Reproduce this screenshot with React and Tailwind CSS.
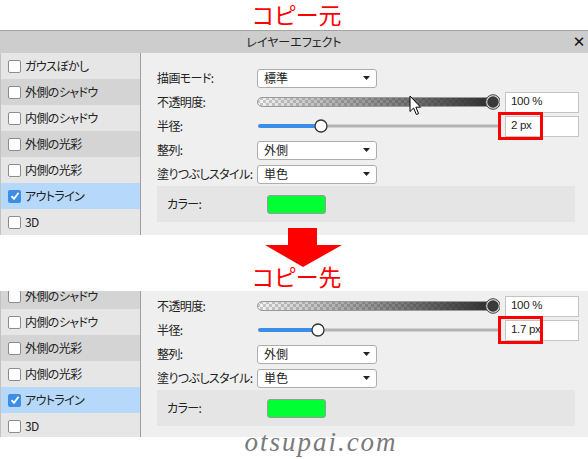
import React from 'react';

const jp = "font-['Meiryo_UI','Noto_Sans_CJK_JP',sans-serif] [font-feature-settings:'palt']";

const Checkbox = ({ checked }) =>
  checked ? (
    <span className="w-[13px] h-[13px] rounded-[2px] bg-[#3c8de3] flex items-center justify-center shrink-0">
      <svg width="10" height="10" viewBox="0 0 10 10">
        <path d="M1.5 5.2 L4 7.8 L8.6 1.8" fill="none" stroke="#fff" strokeWidth="1.8" />
      </svg>
    </span>
  ) : (
    <span className="w-[13px] h-[13px] rounded-[2px] bg-white border border-[#8c8c8c] shrink-0" />
  );

const EffectRow = ({ label, bg, checked, cut }) => (
  <div className={`flex items-center gap-[4px] pl-[7px] h-[26px] shrink-0 ${bg} ${cut ? 'mt-[-8px]' : ''}`}>
    <Checkbox checked={checked} />
    <span className="text-[12px] tracking-[-0.6px] text-[#222] whitespace-nowrap">{label}</span>
  </div>
);

const Dropdown = ({ value }) => (
  <div className="w-[120px] h-[19px] bg-white border border-[#adadad] rounded-[3px] flex items-center justify-between pl-[6px] pr-[6px]">
    <span className="text-[12px] text-[#222]">{value}</span>
    <svg width="7" height="4" viewBox="0 0 7 4">
      <path d="M0 0 H7 L3.5 4 Z" fill="#222" />
    </svg>
  </div>
);

const ValueBox = ({ value, marked }) => (
  <div className="relative ml-[5px]">
    <div className="w-[74px] h-[21px] bg-white border border-[#c4c4c4] flex items-center pl-[5px] text-[11.5px] tracking-[-0.3px] text-[#222] font-['Liberation_Sans',sans-serif]">
      {value}
    </div>
    {marked && (
      <div className="absolute left-[-7px] top-[-4px] w-[45px] h-[28px] border-[3px] border-[#ff0000]" />
    )}
  </div>
);

const OpacitySlider = ({ id }) => (
  <svg width="243" height="16" viewBox="0 0 243 16" className="block shrink-0">
    <defs>
      <pattern id={`chk-${id}`} width="6" height="6" patternUnits="userSpaceOnUse">
        <rect width="6" height="6" fill="#f4f4f4" />
        <rect width="3" height="3" fill="#c9c9c9" />
        <rect x="3" y="3" width="3" height="3" fill="#c9c9c9" />
      </pattern>
      <linearGradient id={`grd-${id}`} x1="0" x2="1" y1="0" y2="0">
        <stop offset="0" stopColor="#2a2a2a" stopOpacity="0" />
        <stop offset="1" stopColor="#2a2a2a" stopOpacity="1" />
      </linearGradient>
    </defs>
    <rect x="0.5" y="3.5" width="240" height="9" rx="4.5" fill={`url(#chk-${id})`} />
    <rect x="0.5" y="3.5" width="240" height="9" rx="4.5" fill={`url(#grd-${id})`} stroke="#9a9a9a" />
    <circle cx="236" cy="8" r="6.5" fill="#3a3a3a" stroke="#d8d8d8" strokeWidth="1.5" />
    <circle cx="236" cy="8" r="7.3" fill="none" stroke="#444" strokeWidth="1" />
  </svg>
);

const RadiusSlider = ({ pos }) => (
  <svg width="243" height="16" viewBox="0 0 243 16" className="block shrink-0">
    <rect x="1" y="6" width={pos - 4} height="4" rx="2" fill="#3b8ee8" />
    <rect x={pos + 5} y="6.5" width={242 - pos - 5} height="3" fill="#b3b3b3" />
    <circle cx={pos} cy="8" r="6" fill="#fff" stroke="#333" strokeWidth="1.3" />
  </svg>
);

const Row = ({ label, children }) => (
  <div className="flex items-center h-[24px]">
    <span className="w-[100px] shrink-0 whitespace-nowrap text-[12px] tracking-[-0.6px] text-[#222]">{label}</span>
    {children}
  </div>
);

const ColorBox = () => (
  <div className="mr-[13px] h-[36px] bg-[#e5e5e5] flex items-center pl-[10px]">
    <span className="w-[100px] text-[12px] tracking-[-0.6px] text-[#222]">カラー:</span>
    <span className="w-[59px] h-[19px] rounded-[3px] bg-[#00ff33] border border-[#9a9a9a]" />
  </div>
);

const leftTop = [
  { label: 'ガウスぼかし', bg: 'bg-[#e6e6e6]' },
  { label: '外側のシャドウ', bg: 'bg-[#d4d4d4]' },
  { label: '内側のシャドウ', bg: 'bg-[#e6e6e6]' },
  { label: '外側の光彩', bg: 'bg-[#d4d4d4]' },
  { label: '内側の光彩', bg: 'bg-[#e6e6e6]' },
  { label: 'アウトライン', bg: 'bg-[#b5d8fb]', checked: true },
  { label: '3D', bg: 'bg-[#e6e6e6]' },
];

export default function App() {
  return (
    <div className={`relative w-[588px] h-[459px] bg-white overflow-hidden ${jp}`}>
      {/* heading */}
      <div className="h-[30px] flex justify-center items-start">
        <span className="text-[23px] leading-[28px] text-[#ff0000] pl-[6px]">コピー元</span>
      </div>

      {/* source window */}
      <div className="h-[205px] border-t border-[#a3a3a3] flex flex-col">
        <div className="h-[22px] bg-[#cdcdcd] flex items-center">
          <span className="w-[18px]" />
          <span className="flex-1 text-center text-[12px] text-[#222]">レイヤーエフェクト</span>
          <span className="w-[18px] text-center text-[15px] leading-none text-[#111] font-['DejaVu_Sans',sans-serif]">✕</span>
        </div>
        <div className="flex flex-1 min-h-0">
          <div className="w-[141px] border-l border-[#c2c2c2] border-r border-r-[#9e9e9e] flex flex-col overflow-hidden">
            {leftTop.map((r) => (
              <EffectRow key={r.label} {...r} />
            ))}
          </div>
          <div className="flex-1 bg-[#efefef] pl-[16px] pt-[13px]">
            <Row label="描画モード:">
              <Dropdown value="標準" />
            </Row>
            <Row label="不透明度:">
              <OpacitySlider id="a" />
              <ValueBox value="100 %" />
            </Row>
            <Row label="半径:">
              <RadiusSlider pos={64} />
              <ValueBox value="2 px" marked />
            </Row>
            <Row label="整列:">
              <Dropdown value="外側" />
            </Row>
            <Row label="塗りつぶしスタイル:">
              <Dropdown value="単色" />
            </Row>
            <ColorBox />
          </div>
        </div>
      </div>

      {/* arrow */}
      <svg width="78" height="40" viewBox="0 0 78 40" className="absolute left-[265px] top-[228px]">
        <path d="M23 0 H52 V17 H77 L38 39 L0 17 H23 Z" fill="#ff0000" />
      </svg>

      {/* cursor */}
      <svg width="13" height="21" viewBox="0 0 13 21" className="absolute left-[409px] top-[95px]">
        <path d="M1 1 V16.5 L4.6 13 L7.4 19.5 L9.6 18.6 L6.9 12.2 H11.6 Z" fill="#fff" stroke="#000" strokeWidth="1" strokeLinejoin="round" />
      </svg>

      {/* heading 2 */}
      <div className="h-[56px] flex justify-center items-end">
        <span className="text-[23px] leading-[30px] text-[#ff0000] pl-[6px]">コピー先</span>
      </div>

      {/* destination window */}
      <div className="h-[146px] flex">
        <div className="w-[141px] border-l border-[#c2c2c2] border-r border-r-[#9e9e9e] flex flex-col overflow-hidden">
          <EffectRow label="外側のシャドウ" bg="bg-[#d4d4d4]" cut />
          <EffectRow label="内側のシャドウ" bg="bg-[#e6e6e6]" />
          <EffectRow label="外側の光彩" bg="bg-[#d4d4d4]" />
          <EffectRow label="内側の光彩" bg="bg-[#e6e6e6]" />
          <EffectRow label="アウトライン" bg="bg-[#b5d8fb]" checked />
          <EffectRow label="3D" bg="bg-[#e6e6e6]" />
        </div>
        <div className="flex-1 bg-[#efefef] pl-[16px] pt-[3px]">
          <Row label="不透明度:">
            <OpacitySlider id="b" />
            <ValueBox value="100 %" />
          </Row>
          <Row label="半径:">
            <RadiusSlider pos={61} />
            <ValueBox value="1.7 px" marked />
          </Row>
          <Row label="整列:">
            <Dropdown value="外側" />
          </Row>
          <Row label="塗りつぶしスタイル:">
            <Dropdown value="単色" />
          </Row>
          <ColorBox />
        </div>
      </div>

      {/* watermark */}
      <div className="relative -mt-[11px] flex justify-center pl-[54px]">
        <span className="text-[27px] leading-[32px] italic tracking-[2px] text-[#7a7a7a] font-['Liberation_Serif',serif]">
          otsupai.com
        </span>
      </div>
    </div>
  );
}
